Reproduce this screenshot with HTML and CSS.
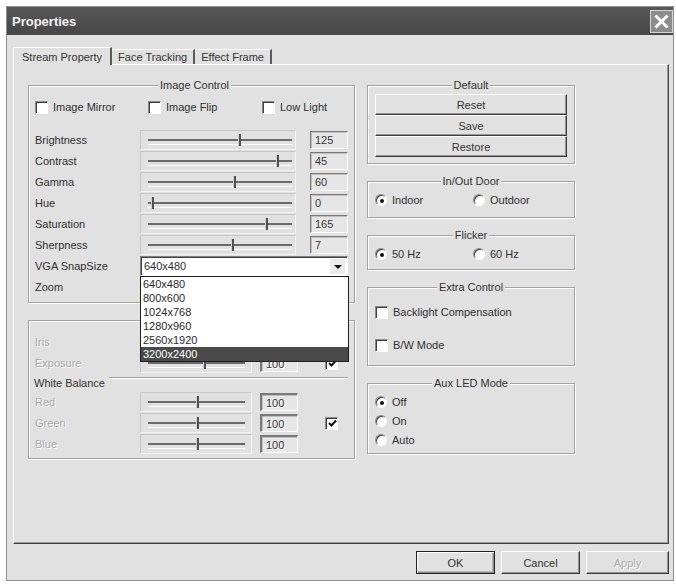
FILE: index.html
```html
<!DOCTYPE html>
<html lang="en">
<head>
  <meta charset="UTF-8" />
  <meta name="viewport" content="width=device-width, initial-scale=1.0" />
  <title>Properties</title>
  <link rel="stylesheet" href="styles.css">
</head>
<body>
  <div class="dialog">
    <div class="titlebar">
      <span class="title">Properties</span>
      <button class="close" aria-label="Close">
        <svg width="23" height="23" viewBox="0 0 23 23">
          <rect x="0.5" y="0.5" width="22" height="22" fill="#8c8c8c" stroke="#d6d6d6" />
          <path d="M6.5 6.5 L16.5 16.5 M16.5 6.5 L6.5 16.5" stroke="#fff" stroke-width="3" stroke-linecap="square" />
        </svg>
      </button>
    </div>

    <div class="dialog-body">
      <!-- Tab strip -->
      <div class="tabs">
        <div class="tab active">Stream Property</div>
        <div class="tab">Face Tracking</div>
        <div class="tab">Effect Frame</div>
      </div>

      <div class="page">
        <!-- Left column: image settings -->
        <div class="col-left">
          <div class="group image-control">
            <div class="group-title">Image Control</div>
            <div class="check-row">
              <label class="check"><span class="box"></span>Image Mirror</label>
              <label class="check"><span class="box"></span>Image Flip</label>
              <label class="check"><span class="box"></span>Low Light</label>
            </div>
            <div class="rows">
              <div class="row">
                <span class="label">Brightness</span>
                <div class="slider"><span class="thumb" style="left: 64%"></span></div>
                <div class="value">125</div>
              </div>
              <div class="row">
                <span class="label">Contrast</span>
                <div class="slider"><span class="thumb" style="left: 89%"></span></div>
                <div class="value">45</div>
              </div>
              <div class="row">
                <span class="label">Gamma</span>
                <div class="slider"><span class="thumb" style="left: 61%"></span></div>
                <div class="value">60</div>
              </div>
              <div class="row">
                <span class="label">Hue</span>
                <div class="slider"><span class="thumb" style="left: 8%"></span></div>
                <div class="value">0</div>
              </div>
              <div class="row">
                <span class="label">Saturation</span>
                <div class="slider"><span class="thumb" style="left: 82%"></span></div>
                <div class="value">165</div>
              </div>
              <div class="row">
                <span class="label">Sherpness</span>
                <div class="slider"><span class="thumb" style="left: 60%"></span></div>
                <div class="value">7</div>
              </div>
              <div class="row">
                <span class="label">VGA SnapSize</span>
                <div class="combo">
                  <span class="combo-text">640x480</span>
                  <span class="combo-arrow"></span>
                  <ul class="combo-list">
                    <li>640x480</li>
                    <li>800x600</li>
                    <li>1024x768</li>
                    <li>1280x960</li>
                    <li>2560x1920</li>
                    <li class="selected">3200x2400</li>
                  </ul>
                </div>
              </div>
              <div class="row">
                <span class="label">Zoom</span>
              </div>
            </div>
          </div>

          <div class="group manual">
            <div class="rows">
              <div class="row">
                <span class="label disabled">Iris</span>
                <div class="slider"><span class="thumb" style="left: 55%"></span></div>
                <div class="value disabled">100</div>
              </div>
              <div class="row">
                <span class="label disabled">Exposure</span>
                <div class="slider"><span class="thumb" style="left: 58%"></span></div>
                <div class="value disabled">100</div>
                <span class="box checked"><svg width="9" height="9" viewBox="0 0 9 9"><path d="M1 4 L3.5 6.5 L8 1.5" fill="none" stroke="#111" stroke-width="2" /></svg></span>
              </div>
              <div class="wb-header">
                <span>White Balance</span>
                <span class="rule"></span>
              </div>
              <div class="row">
                <span class="label disabled">Red</span>
                <div class="slider"><span class="thumb" style="left: 52%"></span></div>
                <div class="value disabled">100</div>
              </div>
              <div class="row">
                <span class="label disabled">Green</span>
                <div class="slider"><span class="thumb" style="left: 52%"></span></div>
                <div class="value disabled">100</div>
                <span class="box checked"><svg width="9" height="9" viewBox="0 0 9 9"><path d="M1 4 L3.5 6.5 L8 1.5" fill="none" stroke="#111" stroke-width="2" /></svg></span>
              </div>
              <div class="row">
                <span class="label disabled">Blue</span>
                <div class="slider"><span class="thumb" style="left: 52%"></span></div>
                <div class="value disabled">100</div>
              </div>
            </div>
          </div>
        </div>

        <!-- Right column: presets and modes -->
        <div class="col-right">
          <div class="group default">
            <div class="group-title">Default</div>
            <div class="stack">
              <button class="btn">Reset</button>
              <button class="btn">Save</button>
              <button class="btn">Restore</button>
            </div>
          </div>

          <div class="group inout">
            <div class="group-title">In/Out Door</div>
            <div class="radio-pair">
              <label class="radio"><span class="dot on"></span>Indoor</label>
              <label class="radio"><span class="dot"></span>Outdoor</label>
            </div>
          </div>

          <div class="group flicker">
            <div class="group-title">Flicker</div>
            <div class="radio-pair">
              <label class="radio"><span class="dot on"></span>50 Hz</label>
              <label class="radio"><span class="dot"></span>60 Hz</label>
            </div>
          </div>

          <div class="group extra">
            <div class="group-title">Extra Control</div>
            <label class="check first"><span class="box"></span>Backlight Compensation</label>
            <label class="check second"><span class="box"></span>B/W Mode</label>
          </div>

          <div class="group aux">
            <div class="group-title">Aux LED Mode</div>
            <div class="radio-list">
              <label class="radio"><span class="dot on"></span>Off</label>
              <label class="radio"><span class="dot"></span>On</label>
              <label class="radio"><span class="dot"></span>Auto</label>
            </div>
          </div>
        </div>
      </div>

      <div class="footer">
        <button class="btn footer-btn default-btn">OK</button>
        <button class="btn footer-btn">Cancel</button>
        <button class="btn footer-btn apply disabled">Apply</button>
      </div>
    </div>
  </div>
</body>
</html>
```

FILE: styles.css
```css
* {
  box-sizing: border-box;
}
body {
  margin: 0;
  background: #fff;
  font-family: "Liberation Sans", Arial, sans-serif;
  font-size: 11px;
  color: #303030;
}
button {
  font: inherit;
  color: inherit;
}

/* Dialog frame */
.dialog {
  margin: 6px 0 0 6px;
  width: 668px;
  height: 575px;
  background: #e1e1e1;
  border: 1px solid #8e8e8e;
  display: flex;
  flex-direction: column;
}
.titlebar {
  height: 28px;
  background: linear-gradient(#575757, #474747);
  display: flex;
  align-items: center;
  justify-content: space-between;
  padding: 0 0 0 5px;
}
.title {
  color: #f4f4f4;
  font-weight: 700;
  font-size: 13px;
}
.close {
  border: none;
  background: none;
  padding: 0;
  width: 23px;
  height: 23px;
  display: block;
}
.close svg {
  display: block;
}
.dialog-body {
  flex: 1;
  display: flex;
  flex-direction: column;
  padding: 12px 4px 6px 6px;
}

/* Tabs */
.tabs {
  display: flex;
  align-items: flex-end;
  height: 18px;
  margin-bottom: -1px;
  position: relative;
  z-index: 1;
}
.tab {
  height: 15px;
  margin-bottom: 1px;
  padding: 0 6px;
  display: flex;
  align-items: center;
  border-top: 1px solid #fff;
  border-right: 2px solid #5a5a5a;
  white-space: nowrap;
  color: #333;
}
.tab.active {
  height: 18px;
  margin-bottom: 0;
  padding: 0 8px;
  border-left: 1px solid #fff;
  background: #e1e1e1;
}

/* Tab page */
.page {
  flex: 1;
  display: flex;
  align-items: flex-start;
  gap: 12px;
  padding: 20px 14px;
  border-top: 1px solid #fff;
  border-left: 1px solid #fff;
  border-right: 1px solid #4a4a4a;
  border-bottom: 1px solid #3e3e3e;
  box-shadow: inset -1px -1px 0 #9c9c9c;
}
.col-left {
  width: 327px;
  display: flex;
  flex-direction: column;
  gap: 17px;
}
.col-right {
  width: 208px;
  display: flex;
  flex-direction: column;
  gap: 17px;
}

/* Etched group box */
.group {
  border: 1px solid #a2a2a2;
  box-shadow: inset 1px 1px 0 #fff, 1px 1px 0 #fff;
  padding: 0 7px;
}
.group-title {
  display: table;
  margin: -7px auto 0;
  padding: 0 2px;
  line-height: 13px;
  background: #e1e1e1;
  color: #333;
}

/* Check boxes and radios */
.check,
.radio {
  display: flex;
  align-items: center;
  gap: 5px;
  height: 14px;
  white-space: nowrap;
}
.box {
  width: 13px;
  height: 13px;
  flex: none;
  background: #fff;
  border: 1px solid;
  border-color: #8a8a8a #fff #fff #8a8a8a;
  box-shadow: inset 1px 1px 0 #404040;
  display: flex;
  align-items: center;
  justify-content: center;
}
.box svg {
  display: block;
  margin: 1px 0 0 1px;
}
.dot {
  width: 12px;
  height: 12px;
  flex: none;
  border-radius: 50%;
  background: #fff;
  border: 1px solid;
  border-color: #8a8a8a #fff #fff #8a8a8a;
  box-shadow: inset 1px 1px 0 #404040;
  display: flex;
  align-items: center;
  justify-content: center;
}
.dot.on::after {
  content: "";
  width: 4px;
  height: 4px;
  border-radius: 50%;
  background: #111;
  margin: 1px 0 0 1px;
}

/* Image Control */
.image-control {
  height: 218px;
  padding: 0 0 0 6px;
}
.check-row {
  display: grid;
  grid-template-columns: 113px 114px auto;
  margin-top: 8px;
}
.image-control .rows {
  margin-top: 16px;
}
.rows {
  display: flex;
  flex-direction: column;
  gap: 1px;
}
.row {
  display: grid;
  grid-template-columns: 91px 156px 38px;
  column-gap: 14px;
  align-items: center;
  height: 20px;
}
.label {
  white-space: nowrap;
}
.disabled {
  color: #a9a9a9;
  text-shadow: 1px 1px 0 #fff;
}
.slider {
  position: relative;
  height: 20px;
  border: 1px solid;
  border-color: #c6c6c6 #f4f4f4 #f4f4f4 #c6c6c6;
}
.slider::before {
  content: "";
  position: absolute;
  left: 7px;
  right: 3px;
  top: 8px;
  height: 3px;
  border-top: 2px solid #6a6a6a;
  border-bottom: 1px solid #fff;
}
.thumb {
  position: absolute;
  top: 3px;
  width: 3px;
  height: 12px;
  margin-left: -2px;
  background: #cfcfcf;
  border-right: 2px solid #505050;
}
.value {
  height: 18px;
  line-height: 16px;
  padding-left: 4px;
  background: #e6e6e6;
  border: 1px solid;
  border-color: #7a7a7a #fff #fff #7a7a7a;
  box-shadow: inset 1px 1px 0 #c0c0c0;
  color: #383838;
}

/* Combo box with its open list */
.combo {
  grid-column: 2 / 4;
  position: relative;
  height: 20px;
  background: #fff;
  border: 1px solid;
  border-color: #808080 #fff #fff #808080;
  box-shadow: inset 1px 1px 0 #404040;
  display: flex;
  align-items: center;
  justify-content: space-between;
  padding: 0 2px 0 3px;
}
.combo-arrow {
  width: 15px;
  height: 15px;
  background: #ececec;
  position: relative;
}
.combo-arrow::after {
  content: "";
  position: absolute;
  left: 4px;
  top: 6px;
  border-left: 4px solid transparent;
  border-right: 4px solid transparent;
  border-top: 4px solid #111;
}
.combo-list {
  position: absolute;
  top: 19px;
  left: -1px;
  width: 209px;
  margin: 0;
  padding: 0;
  list-style: none;
  background: #fff;
  border: 1px solid #1e1e1e;
  z-index: 5;
}
.combo-list li {
  height: 14px;
  line-height: 14px;
  padding-left: 2px;
  color: #2a2a2a;
}
.combo-list li.selected {
  background: #4a4a4a;
  color: #fff;
}

/* Manual group below */
.manual {
  height: 139px;
  padding: 11px 0 0 6px;
}
.manual .row {
  grid-template-columns: 97px 112px 38px 13px;
  column-gap: 8px;
}
.manual .slider::before {
  right: 6px;
}
.manual .value {
  border-width: 2px 1px 1px 2px;
}
.manual .box {
  margin-left: 19px;
}
.wb-header {
  height: 17px;
  display: flex;
  align-items: center;
  gap: 4px;
  margin-left: -1px;
  color: #333;
}
.rule {
  flex: 1;
  align-self: flex-start;
  margin: 3px 6px 0 0;
  border-top: 1px solid #a2a2a2;
  border-bottom: 1px solid #fff;
}

/* Raised push buttons */
.btn {
  display: block;
  height: 21px;
  padding: 0;
  background: #e1e1e1;
  border: 1px solid;
  border-color: #fff #3c3c3c #3c3c3c #fff;
  box-shadow: inset -1px -1px 0 #959595;
  color: #333;
  text-align: center;
}
.btn.disabled {
  color: #ababab;
  text-shadow: 1px 1px 0 #fff;
}

/* Right column groups */
.default {
  height: 79px;
}
.stack {
  margin-top: 2px;
}
.stack .btn {
  width: 100%;
}
.inout {
  height: 37px;
}
.flicker {
  height: 35px;
}
.radio-pair {
  display: grid;
  grid-template-columns: 98px auto;
  margin-top: 5px;
}
.extra {
  height: 79px;
}
.extra .first {
  margin-top: 11px;
}
.extra .second {
  margin-top: 19px;
}
.aux {
  height: 71px;
}
.radio-list {
  display: flex;
  flex-direction: column;
  gap: 5px;
  margin-top: 5px;
}

/* Footer buttons */
.footer {
  display: flex;
  justify-content: flex-end;
  gap: 6px;
  margin-top: 7px;
}
.footer-btn {
  width: 79px;
  height: 23px;
}
.footer-btn.apply {
  width: 83px;
}
.default-btn {
  border: 1px solid #222;
  box-shadow: inset 1px 1px 0 #fff, inset -1px -1px 0 #8a8a8a, inset -2px -2px 0 #b4b4b4;
}
```
